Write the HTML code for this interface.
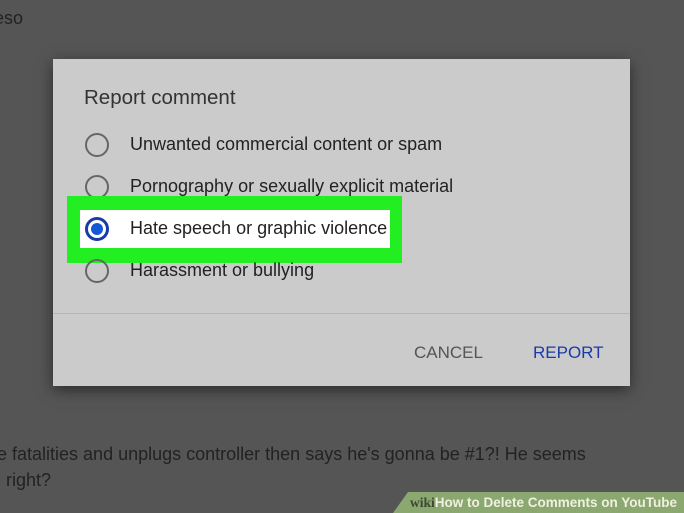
<!DOCTYPE html>
<html><head><style>
body{margin:0;width:684px;height:513px;background:#555;position:relative;overflow:hidden;font-family:"Liberation Sans",sans-serif;}
.t{position:absolute;color:#222;font-size:18px;white-space:nowrap}
.d{position:absolute;left:53px;top:59px;width:577px;height:327px;background:#cbcbcb;box-shadow:0 4px 14px rgba(0,0,0,.5)}
.r{position:absolute;border:2px solid #666;border-radius:50%;box-sizing:border-box;width:24px;height:24px}
.l{position:absolute;font-size:18px;color:#222;white-space:nowrap}
</style></head><body>
<div class="t" style="left:-6px;top:8px">eso</div>
<div class="d">
<div class="l" style="left:31px;top:27px;font-size:20.5px;color:#333">Report comment</div>
<div class="r" style="left:32px;top:74px"></div><div class="l" style="left:77px;top:75px">Unwanted commercial content or spam</div>
<div class="r" style="left:32px;top:116px"></div><div class="l" style="left:77px;top:117px">Pornography or sexually explicit material</div>
<div style="position:absolute;left:14px;top:137px;width:335px;height:67px;background:#22ee22"></div>
<div style="position:absolute;left:27px;top:151px;width:310px;height:38px;background:#fff"></div>
<div class="r" style="left:32px;top:158px;border-color:#1a3aa8;border-width:3px"><div style="position:absolute;left:3px;top:3px;width:12px;height:12px;border-radius:50%;background:#1558d6"></div></div>
<div class="l" style="left:77px;top:159px">Hate speech or graphic violence</div>
<div class="r" style="left:32px;top:200px"></div><div class="l" style="left:77px;top:201px">Harassment or bullying</div>
<div style="position:absolute;left:0;top:254px;width:577px;height:1px;background:#b5b5b5"></div>
<div class="l" style="left:361px;top:284px;color:#555;font-size:17px">CANCEL</div>
<div class="l" style="left:480px;top:284px;color:#1a3aa8;font-size:17px">REPORT</div>
</div>
<div class="t" style="left:-3px;top:444px">e fatalities and unplugs controller then says he's gonna be #1?! He seems</div>
<div class="t" style="left:-3px;top:470px">l right?</div>
<div style="position:absolute;left:393px;top:492px;width:300px;height:21px;background:#8aa870;clip-path:polygon(15px 0,100% 0,100% 100%,0 100%)"></div>
<div style="position:absolute;left:410px;top:495px;font-size:13.5px;font-weight:bold;color:#f0f0e0;white-space:nowrap"><span style="font-family:'Liberation Serif',serif;color:#3a4a30">wiki</span>How to Delete Comments on YouTube</div>
</body></html>
